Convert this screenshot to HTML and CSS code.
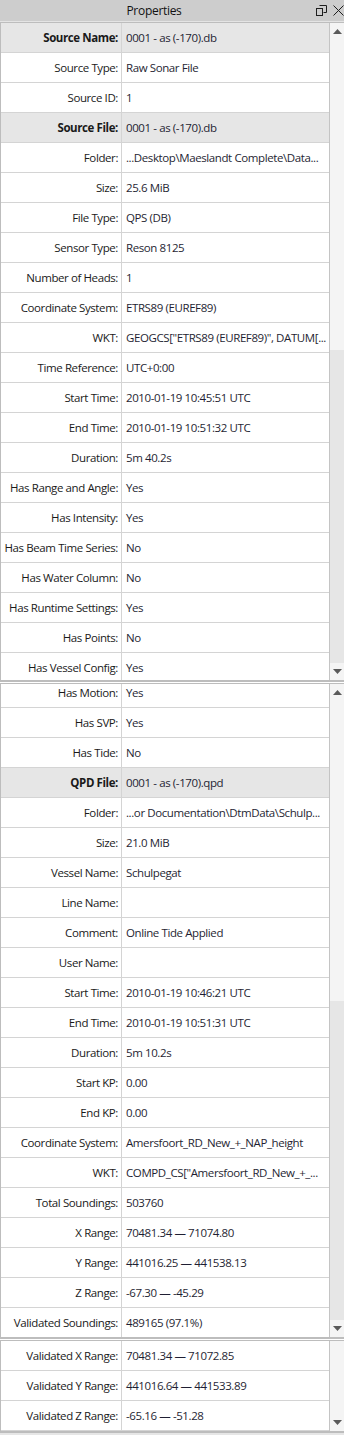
FILE: index.html
```html
<!DOCTYPE html>
<html>
<head>
<meta charset="utf-8">
<link rel="stylesheet" href="styles.css">
</head>
<body>
<div class="panel">
  <div class="titlebar">
    <div class="title">Properties</div>
    <div class="tbtns">
      <svg class="ico-restore" width="11" height="11" viewBox="0 0 11 11"><path d="M3.5 0.5h7v7h-3" fill="none" stroke="#1e1e1e"/><rect x="0.5" y="3.5" width="6" height="7" fill="none" stroke="#1e1e1e"/></svg>
      <svg class="ico-close" width="11" height="11" viewBox="0 0 11 11"><path d="M0.5 0.5L10.5 10.5M10.5 0.5L0.5 10.5" stroke="#1e1e1e" stroke-width="1"/></svg>
    </div>
  </div>
  <div class="strip"></div>

  <div class="pane p1">
    <div class="grid">
      <div class="rows">
        <div class="row cat"><div class="k">Source Name:</div><div class="v">0001 - as (-170).db</div></div>
        <div class="row"><div class="k">Source Type:</div><div class="v">Raw Sonar File</div></div>
        <div class="row"><div class="k">Source ID:</div><div class="v">1</div></div>
        <div class="row cat"><div class="k">Source File:</div><div class="v">0001 - as (-170).db</div></div>
        <div class="row"><div class="k">Folder:</div><div class="v">...Desktop\Maeslandt Complete\Data...</div></div>
        <div class="row"><div class="k">Size:</div><div class="v">25.6 MiB</div></div>
        <div class="row"><div class="k">File Type:</div><div class="v">QPS (DB)</div></div>
        <div class="row"><div class="k">Sensor Type:</div><div class="v">Reson 8125</div></div>
        <div class="row"><div class="k">Number of Heads:</div><div class="v">1</div></div>
        <div class="row"><div class="k">Coordinate System:</div><div class="v">ETRS89 (EUREF89)</div></div>
        <div class="row"><div class="k">WKT:</div><div class="v">GEOGCS["ETRS89 (EUREF89)", DATUM[...</div></div>
        <div class="row"><div class="k">Time Reference:</div><div class="v">UTC+0:00</div></div>
        <div class="row"><div class="k">Start Time:</div><div class="v">2010-01-19 10:45:51 UTC</div></div>
        <div class="row"><div class="k">End Time:</div><div class="v">2010-01-19 10:51:32 UTC</div></div>
        <div class="row"><div class="k">Duration:</div><div class="v">5m 40.2s</div></div>
        <div class="row"><div class="k">Has Range and Angle:</div><div class="v">Yes</div></div>
        <div class="row"><div class="k">Has Intensity:</div><div class="v">Yes</div></div>
        <div class="row"><div class="k">Has Beam Time Series:</div><div class="v">No</div></div>
        <div class="row"><div class="k">Has Water Column:</div><div class="v">No</div></div>
        <div class="row"><div class="k">Has Runtime Settings:</div><div class="v">Yes</div></div>
        <div class="row"><div class="k">Has Points:</div><div class="v">No</div></div>
        <div class="row"><div class="k">Has Vessel Config:</div><div class="v">Yes</div></div>
      </div>
    </div>
    <div class="sbar">
      <div class="sbtn"><svg width="9" height="5" viewBox="0 0 9 5"><polygon points="0,5 9,5 4.5,0" fill="#5a5a5a"/></svg></div>
      <div class="thumb" style="height:310px"></div>
      <div class="track"></div>
      <div class="sbtn"><svg width="9" height="5" viewBox="0 0 9 5"><polygon points="0,0 9,0 4.5,5" fill="#5a5a5a"/></svg></div>
    </div>
  </div>

  <div class="pane p2">
    <div class="grid">
      <div class="rows shifted">
        <div class="row"><div class="k">Has Motion:</div><div class="v">Yes</div></div>
        <div class="row"><div class="k">Has SVP:</div><div class="v">Yes</div></div>
        <div class="row"><div class="k">Has Tide:</div><div class="v">No</div></div>
        <div class="row cat"><div class="k">QPD File:</div><div class="v">0001 - as (-170).qpd</div></div>
        <div class="row"><div class="k">Folder:</div><div class="v">...or Documentation\DtmData\Schulp...</div></div>
        <div class="row"><div class="k">Size:</div><div class="v">21.0 MiB</div></div>
        <div class="row"><div class="k">Vessel Name:</div><div class="v">Schulpegat</div></div>
        <div class="row"><div class="k">Line Name:</div><div class="v"></div></div>
        <div class="row"><div class="k">Comment:</div><div class="v">Online Tide Applied</div></div>
        <div class="row"><div class="k">User Name:</div><div class="v"></div></div>
        <div class="row"><div class="k">Start Time:</div><div class="v">2010-01-19 10:46:21 UTC</div></div>
        <div class="row"><div class="k">End Time:</div><div class="v">2010-01-19 10:51:31 UTC</div></div>
        <div class="row"><div class="k">Duration:</div><div class="v">5m 10.2s</div></div>
        <div class="row"><div class="k">Start KP:</div><div class="v">0.00</div></div>
        <div class="row"><div class="k">End KP:</div><div class="v">0.00</div></div>
        <div class="row"><div class="k">Coordinate System:</div><div class="v">Amersfoort_RD_New_+_NAP_height</div></div>
        <div class="row"><div class="k">WKT:</div><div class="v">COMPD_CS["Amersfoort_RD_New_+_...</div></div>
        <div class="row"><div class="k">Total Soundings:</div><div class="v">503760</div></div>
        <div class="row"><div class="k">X Range:</div><div class="v">70481.34 — 71074.80</div></div>
        <div class="row"><div class="k">Y Range:</div><div class="v">441016.25 — 441538.13</div></div>
        <div class="row"><div class="k">Z Range:</div><div class="v">-67.30 — -45.29</div></div>
        <div class="row"><div class="k">Validated Soundings:</div><div class="v">489165 (97.1%)</div></div>
      </div>
    </div>
    <div class="sbar">
      <div class="sbtn"><svg width="9" height="5" viewBox="0 0 9 5"><polygon points="0,5 9,5 4.5,0" fill="#5a5a5a"/></svg></div>
      <div class="thumb" style="height:300px"></div>
      <div class="track"></div>
      <div class="sbtn"><svg width="9" height="5" viewBox="0 0 9 5"><polygon points="0,0 9,0 4.5,5" fill="#5a5a5a"/></svg></div>
    </div>
  </div>

  <div class="pane p3">
    <div class="grid">
      <div class="rows">
        <div class="row"><div class="k">Validated X Range:</div><div class="v">70481.34 — 71072.85</div></div>
        <div class="row"><div class="k">Validated Y Range:</div><div class="v">441016.64 — 441533.89</div></div>
        <div class="row"><div class="k">Validated Z Range:</div><div class="v">-65.16 — -51.28</div></div>
      </div>
    </div>
    <div class="sbar">
      <div class="thumb" style="flex:1"></div>
      <div class="sbtn"><svg width="9" height="5" viewBox="0 0 9 5"><polygon points="0,0 9,0 4.5,5" fill="#5a5a5a"/></svg></div>
    </div>
  </div>
  <div class="foot"></div>
</div>
</body>
</html>
```
FILE: styles.css
```css
* { box-sizing: border-box; }
html, body { margin: 0; padding: 0; background: #ffffff; }
body {
  font-family: "Open Sans", "Noto Sans", sans-serif;
  font-size: 11.5px;
  letter-spacing: -0.4px;
  color: #1a1a1a;
}
.panel { width: 344px; }

.titlebar {
  height: 21px;
  background: #cdcdcd;
  display: flex;
  align-items: center;
}
.title {
  flex: 1;
  text-align: center;
  padding-right: 8px;
  font-size: 12px;
  letter-spacing: -0.3px;
  color: #111;
}
.tbtns {
  width: 28px;
  display: flex;
  align-items: center;
  gap: 6px;
}
.strip { height: 1px; background: #e4e4e4; }

.pane {
  display: flex;
  border-top: 1px solid #bdbdbd;
  border-left: 1px solid #bdbdbd;
  border-bottom: 2px solid #bdbdbd;
  background: #fff;
}
.p1 { height: 660px; }
.p2 { height: 656px; margin-top: 1px; }
.p3 { height: 93px; margin-top: 1px; }
.grid { flex: 1; overflow: hidden; }
.rows.shifted { margin-top: -6px; }

.row {
  display: grid;
  grid-template-columns: 121px 1fr;
  height: 30px;
  border-bottom: 1px solid #d4d4d4;
  line-height: 29px;
}
.k {
  text-align: right;
  padding-right: 3px;
  border-right: 1px solid #d4d4d4;
  white-space: nowrap;
  overflow: hidden;
}
.v {
  padding-left: 4px;
  white-space: nowrap;
  overflow: hidden;
  color: #1f1f33;
}
.row.cat { background: #e6e6e6; }
.row.cat .k { font-weight: 700; }

.sbar {
  width: 15px;
  border-left: 1px solid #c4c4c4;
  display: flex;
  flex-direction: column;
  background: #e6e6e6;
}
.sbtn {
  height: 17px;
  flex: 0 0 17px;
  background: #f4f4f4;
  display: flex;
  align-items: center;
  justify-content: center;
}
.thumb { background: #f4f4f4; flex: 0 0 auto; }
.track { flex: 1; background: #e6e6e6; }

.foot { height: 2px; background: #e6e6e6; }
```
